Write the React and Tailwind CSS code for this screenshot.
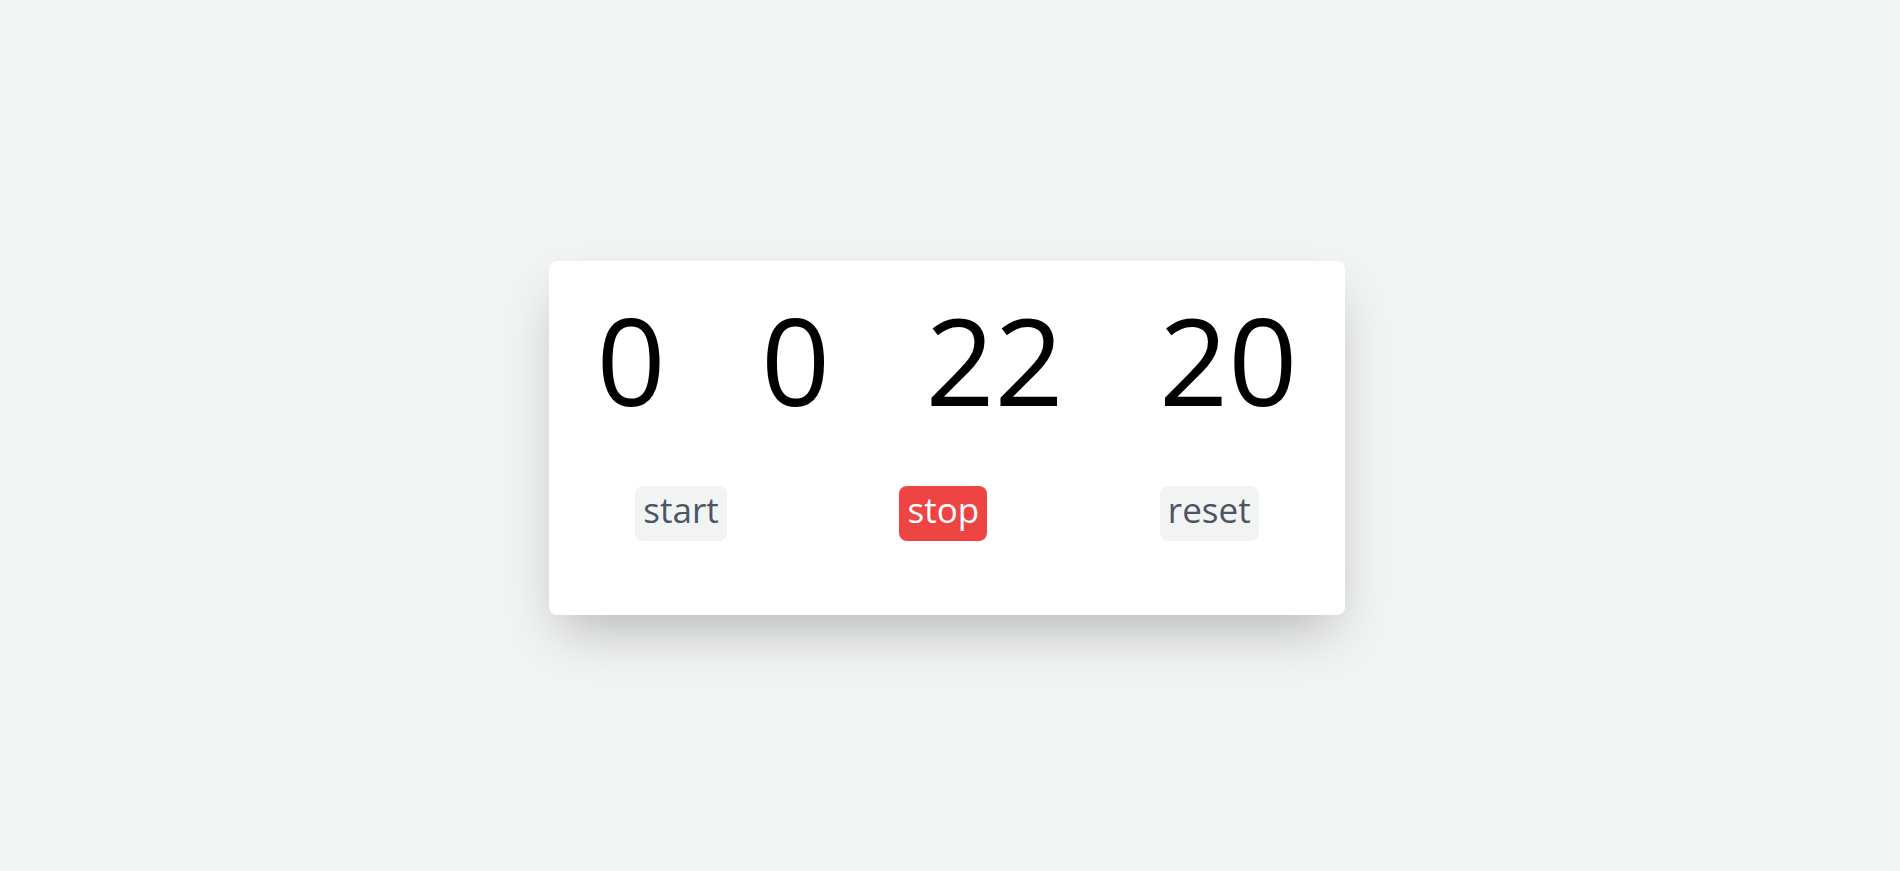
export default function App() {
  const nums = ["0", "0", "22", "20"];
  return (
    <div
      className="h-screen w-full bg-[#f2f3f3] flex items-center justify-center pt-[5px] pr-[6px]"
      style={{ fontFamily: '"Open Sans", "Noto Sans", sans-serif' }}
    >
      <div className="w-[796px] h-[354px] bg-white rounded-lg shadow-2xl flex flex-col pt-[38px]">
        <div className="flex justify-around">
          {nums.map((n, i) => (
            <span key={i} className="text-[121px] leading-none text-black">
              {n}
            </span>
          ))}
        </div>
        <div className="flex justify-around mt-[66px]">
          <button className="h-[55px] px-2 pb-[6px] flex items-center rounded-lg bg-[#f2f3f3] text-[#4b5563] text-[35px]">
            start
          </button>
          <button className="h-[55px] px-2 pb-[6px] flex items-center rounded-lg bg-[#ef4444] text-white text-[35px]">
            stop
          </button>
          <button className="h-[55px] px-2 pb-[6px] flex items-center rounded-lg bg-[#f2f3f3] text-[#4b5563] text-[35px]">
            reset
          </button>
        </div>
      </div>
    </div>
  );
}
